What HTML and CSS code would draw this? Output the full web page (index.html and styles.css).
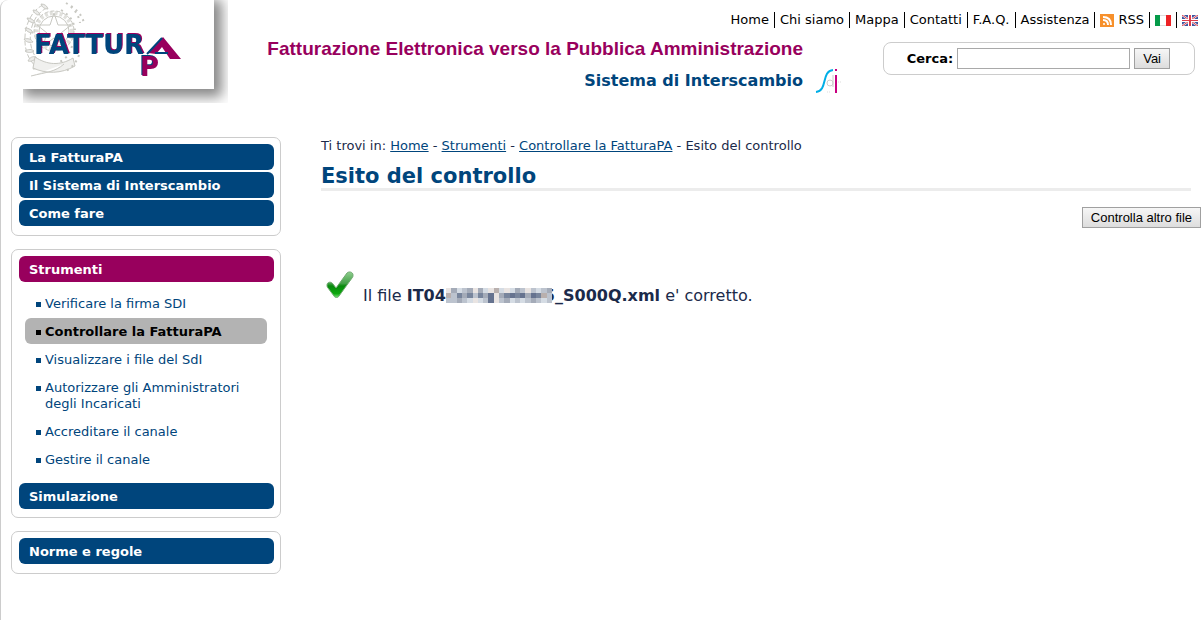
FILE: index.html
```
<!DOCTYPE html>
<html lang="it">
<head>
<meta charset="UTF-8">
<title>Esito del controllo - FatturaPA</title>
<link rel="stylesheet" href="styles.css">
</head>
<body>
<div class="page">
    <header class="header">
        <a class="logo" href="#" aria-label="FatturaPA">
            <span class="logo-box">
                <svg width="191" height="89" viewBox="0 0 191 89">
                    <!-- emblema -->
                    <g fill="none" stroke="#c8c8c2">
                        <circle cx="31" cy="31" r="18" stroke-width="4" stroke-dasharray="3 2" stroke="#e0e0dc"/>
                        <circle cx="31" cy="31" r="15"/>
                        <circle cx="31" cy="31" r="20" stroke-dasharray="4 2"/>
                        <path d="M31 13l4 12h13l-10 8 4 13-11-8-11 8 4-13-10-8h13z"/>
                        <path d="M20 5C5 12-2 35 4 53c3 9 9 15 17 18M24 8C10 14 4 33 9 50c3 8 8 13 15 16" stroke-dasharray="5 2"/>
                        <path d="M4 18c4 0 7 2 8 5-4 0-7-2-8-5M2 28c4 0 7 2 8 5-4 0-7-2-8-5M1 39c4-1 7 0 9 3-4 1-7 0-9-3M2 51c3-2 7-2 9 0-3 2-6 2-9 0M5 61c2-4 5-5 8-4-1 3-4 5-8 4M10 69c1-4 4-6 7-6 0 4-3 6-7 6M10 10c4 0 6 2 7 5-4 0-6-2-7-5M18 4c4 0 6 2 7 5-4 0-6-2-7-5" fill="#ececea"/>
                        <path d="M12 57c12 8 25 9 38 1l2 8c-14 8-29 8-42 2zM8 76c16-4 24-4 33-12" fill="#f0f0ee"/>
                        <path d="M43 3c7 4 13 12 14 20M38 10c9 5 13 12 14 20M56 55c-3 8-8 14-15 17M49 46c-2 8-7 14-13 16M48 6c6 4 11 9 13 17" stroke-width="2" stroke-dasharray="2 4"/>
                    </g>
                    <text class="logo-blue" x="11" y="54">FATTUR</text>
                    <text class="logo-red" x="117" y="76">P</text>
                    <path d="M125 53l15-16 18 22h-11l-8-12-6 7z" fill="#98005d"/>
                    <path d="M124 54l15-16M132 53h13" fill="none" stroke="#00457c" stroke-width="2"/>
                </svg>
            </span>
        </a>
        <div class="titles">
            <div class="title">Fatturazione Elettronica verso la Pubblica Amministrazione</div>
            <div class="subtitle">
                <span>Sistema di Interscambio</span>
                <svg width="28" height="28" viewBox="0 0 28 28" fill="none">
                    <path d="M1 25c12-1 5-21 17-22" stroke="#00aee6" stroke-width="2"/>
                    <circle cx="15" cy="16" r="3" stroke="#ccc"/>
                    <path d="M18 8v12" stroke="#ccc"/>
                    <path d="M21 8v18M21 2v2" stroke="#c8007f" stroke-width="2"/>
                    <path d="M12 25h4M23 15h4" stroke="#ddd" stroke-dasharray="1 1"/>
                </svg>
            </div>
        </div>
        <div class="tools">
            <ul class="topnav">
                <li><a href="#">Home</a></li>
                <li><a href="#">Chi siamo</a></li>
                <li><a href="#">Mappa</a></li>
                <li><a href="#">Contatti</a></li>
                <li><a href="#">F.A.Q.</a></li>
                <li><a href="#">Assistenza</a></li>
                <li>
                    <a href="#">
                        <svg width="14" height="13" viewBox="0 0 14 13" fill="none">
                            <rect width="14" height="13" fill="#f7902b"/>
                            <circle cx="4" cy="10" r="1" fill="#fff"/>
                            <path d="M3 6c3 0 5 2 5 5M3 3c5 0 8 3 8 8" stroke="#fff" stroke-width="2"/>
                        </svg>
                        RSS
                    </a>
                </li>
                <li>
                    <a href="#" aria-label="Italiano">
                        <svg width="16" height="11" viewBox="0 0 16 11">
                            <rect width="16" height="11" fill="#fff"/>
                            <rect width="5" height="11" fill="#059b49"/>
                            <rect x="11" width="5" height="11" fill="#ed2225"/>
                            <path d="M5 0h6M5 11h6" stroke="#bbb"/>
                        </svg>
                    </a>
                </li>
                <li>
                    <a href="#" aria-label="English">
                        <svg width="16" height="11" viewBox="0 0 16 11">
                            <rect width="16" height="11" fill="#3d559f"/>
                            <path d="M0 0l16 11M16 0L0 11" stroke="#fff" stroke-width="2"/>
                            <path d="M0 0l16 11M16 0L0 11" stroke="#dd3c4b"/>
                            <path d="M6 0h4v4h6v3h-6v4H6V7H0V4h6z" fill="#fff"/>
                            <path d="M7 0h2v5h7v1H9v5H7V6H0V5h7z" fill="#dd3c4b"/>
                        </svg>
                    </a>
                </li>
            </ul>
            <form class="search">
                <label for="cerca">Cerca:</label>
                <input type="text" id="cerca" name="cerca">
                <button type="button">Vai</button>
            </form>
        </div>
    </header>

    <div class="columns">
        <nav class="sidebar">
            <div class="menu">
                <a class="voice" href="#">La FatturaPA</a>
                <a class="voice" href="#">Il Sistema di Interscambio</a>
                <a class="voice" href="#">Come fare</a>
            </div>
            <div class="menu">
                <a class="voice active" href="#">Strumenti</a>
                <ul class="submenu">
                    <li><a href="#">Verificare la firma SDI</a></li>
                    <li class="current"><a href="#">Controllare la FatturaPA</a></li>
                    <li><a href="#">Visualizzare i file del SdI</a></li>
                    <li><a href="#">Autorizzare gli Amministratori degli Incaricati</a></li>
                    <li><a href="#">Accreditare il canale</a></li>
                    <li><a href="#">Gestire il canale</a></li>
                </ul>
                <a class="voice" href="#">Simulazione</a>
            </div>
            <div class="menu">
                <a class="voice" href="#">Norme e regole</a>
            </div>
        </nav>

        <main class="content">
            <div class="breadcrumb">Ti trovi in: <a href="#">Home</a> - <a href="#">Strumenti</a> - <a href="#">Controllare la FatturaPA</a> - Esito del controllo</div>
            <h1>Esito del controllo</h1>
            <div class="actions">
                <button type="button">Controlla altro file</button>
            </div>
            <div class="result">
                <svg class="check" width="28" height="28" viewBox="0 0 28 28">
                    <defs>
                        <linearGradient id="green" x1="0" y1="0" x2="0" y2="1">
                            <stop offset="0" stop-color="#8fce8f"/>
                            <stop offset="0.45" stop-color="#43a047"/>
                            <stop offset="0.55" stop-color="#078a0c"/>
                            <stop offset="0.85" stop-color="#0ea80e"/>
                            <stop offset="1" stop-color="#7be27b"/>
                        </linearGradient>
                    </defs>
                    <path d="M1 14c0-3 4-4 6-1l3 4L21 2c2-2 6-1 6 2 0 1 0 2-1 3L13 25c-1 2-4 2-5 0L2 17c-1-1-1-2-1-3z" fill="url(#green)" stroke="#6fa96f"/>
                </svg>
                <p>Il file <b>IT04<svg class="mask" width="106" height="15" viewBox="0 0 100 15" preserveAspectRatio="none" shape-rendering="crispEdges">
                    <rect width="100" height="15" fill="#bcc3ce"/>
                    <!-- righe del mosaico che copre la partita IVA -->
                    <path d="M0 0h5v5H0zM25 0h5v5h-5zM40 0h5v5h-5zM55 0h5v5h-5zM75 0h5v5h-5zM25 10h5v5h-5zM45 5h5v10h-5z" fill="#e9e4e2"/>
                    <path d="M10 0h5v5h-5zM35 0h5v5h-5zM50 0h5v5h-5zM60 0h5v5h-5zM85 0h5v5h-5zM20 10h5v5h-5zM30 10h5v5h-5zM60 10h5v5h-5zM70 10h5v5h-5zM90 10h5v5h-5z" fill="#d5dce4"/>
                    <path d="M5 0h5v5H5zM20 0h5v5h-5zM30 0h5v5h-5zM65 0h5v5h-5zM95 0h5v5h-5zM15 5h5v5h-5zM35 5h5v5h-5zM50 5h5v5h-5zM75 5h5v5h-5zM10 10h5v5h-5zM55 10h5v5h-5zM80 10h5v5h-5z" fill="#a4abb8"/>
                    <path d="M10 5h5v5h-5zM20 5h5v5h-5zM30 5h5v5h-5zM55 5h5v5h-5zM65 5h5v5h-5zM85 5h5v5h-5z" fill="#78859c"/>
                    <path d="M40 5h5v10h-5zM60 5h5v5h-5zM70 5h5v5h-5zM80 5h5v5h-5z" fill="#66738f"/>
                    <path d="M0 5h5v5H0zM45 0h5v5h-5zM90 5h5v5h-5z" fill="#b9b0ae"/>
                </svg>5_S000Q.xml</b> e' corretto.</p>
            </div>
        </main>
    </div>
</div>
</body>
</html>
```
FILE: styles.css
```
* {
    box-sizing: border-box;
}

body {
    margin: 0;
    background-color: #fff;
    color: #1b2a4a;
    font-family: Verdana, "DejaVu Sans", sans-serif;
    font-size: 13px;
    line-height: 16px;
}

a {
    color: #00457c;
}

ul {
    list-style: none;
    margin: 0;
    padding: 0;
}

.page {
    min-height: 100vh;
    border-left: 1px solid #ccc;
    border-top-left-radius: 8px;
}

.header {
    display: flex;
    height: 138px;
    padding-left: 22px;
}

.logo {
    width: 205px;
    height: 103px;
    overflow: hidden;
    flex: none;
}

.logo-box {
    display: block;
    width: 191px;
    height: 89px;
    box-shadow: 4px 4px 12px 4px #888;
}

.logo svg {
    display: block;
}

.logo-blue {
    fill: #00457c;
    font: bold 26px "DejaVu Sans", sans-serif;
    filter: drop-shadow(1px -1px 0 #98005d);
}

.logo-red {
    fill: #98005d;
    font: bold 26px "DejaVu Sans", sans-serif;
    filter: drop-shadow(-1px -1px 0 #00457c);
}

.titles {
    flex: 1;
    display: flex;
    flex-direction: column;
    align-items: flex-end;
    padding-top: 37px;
    white-space: nowrap;
}

.title {
    color: #98005d;
    font: bold 19px/24px Arial, "Liberation Sans", sans-serif;
    padding-right: 40px;
}

.subtitle {
    display: flex;
    align-items: center;
    gap: 12px;
    padding-top: 6px;
    color: #00457c;
    font-size: 16px;
    font-weight: bold;
    line-height: 24px;
}

.tools {
    width: 358px;
    flex: none;
    padding-top: 12px;
}

.topnav {
    display: flex;
    justify-content: flex-end;
    margin-left: -120px;
    white-space: nowrap;
}

.topnav li {
    display: flex;
    align-items: center;
    padding: 0 5px;
    border-left: 1px solid #000;
}

.topnav li:first-child {
    border-left: none;
}

.topnav li:last-child {
    padding-right: 3px;
}

.topnav a {
    display: flex;
    align-items: center;
    gap: 4px;
    color: #000;
    text-decoration: none;
}

.search {
    display: flex;
    align-items: center;
    justify-content: flex-end;
    gap: 4px;
    height: 33px;
    margin: 14px 6px 0 40px;
    padding-right: 24px;
    border: 1px solid #ccc;
    border-radius: 8px;
}

.search label {
    color: #000;
    font-weight: bold;
}

.search input {
    width: 173px;
    height: 21px;
    border: 1px solid #a9a9a9;
}

button {
    height: 21px;
    padding: 0 8px;
    border: 1px solid #a0a0a0;
    background: linear-gradient(#f6f6f6, #ddd);
    color: #000;
    font: 13px Arial, "Liberation Sans", sans-serif;
}

.columns {
    display: flex;
    gap: 40px;
}

.sidebar {
    width: 270px;
    margin: -1px 0 0 10px;
    flex: none;
}

.menu {
    display: flex;
    flex-direction: column;
    gap: 2px;
    margin-bottom: 13px;
    padding: 6px 6px 9px 7px;
    border: 1px solid #ccc;
    border-radius: 7px;
}

.menu:nth-child(2) {
    padding-bottom: 8px;
}

.voice {
    padding: 6px 10px 4px;
    border-radius: 6px;
    background-color: #00457c;
    color: #fff;
    font-weight: bold;
    text-decoration: none;
}

.voice.active {
    background-color: #98005d;
}

.submenu {
    display: flex;
    flex-direction: column;
    gap: 2px;
    padding: 6px 7px 9px 6px;
}

.submenu li {
    display: flex;
    gap: 4px;
    padding: 6px 10px 4px 11px;
    border-radius: 6px;
    color: #00457c;
}

.submenu li::before {
    content: "";
    width: 5px;
    height: 5px;
    margin-top: 6px;
    flex: none;
    background-color: currentColor;
}

.submenu a {
    color: inherit;
    text-decoration: none;
}

.submenu .current {
    background-color: #b3b3b3;
    color: #000;
    font-weight: bold;
}

.content {
    flex: 1;
}

h1 {
    margin: 10px 10px 0 0;
    border-bottom: 3px solid #ececec;
    color: #00457c;
    font-size: 21px;
    line-height: 24px;
}

.actions {
    display: flex;
    justify-content: flex-end;
    padding-top: 16px;
}

.result {
    display: flex;
    gap: 9px;
    padding: 43px 0 0 5px;
    font-size: 16px;
}

.result p {
    margin: 17px 0 0;
}

.mask {
    position: relative;
    margin-right: -8px;
    vertical-align: -2px;
}
```
